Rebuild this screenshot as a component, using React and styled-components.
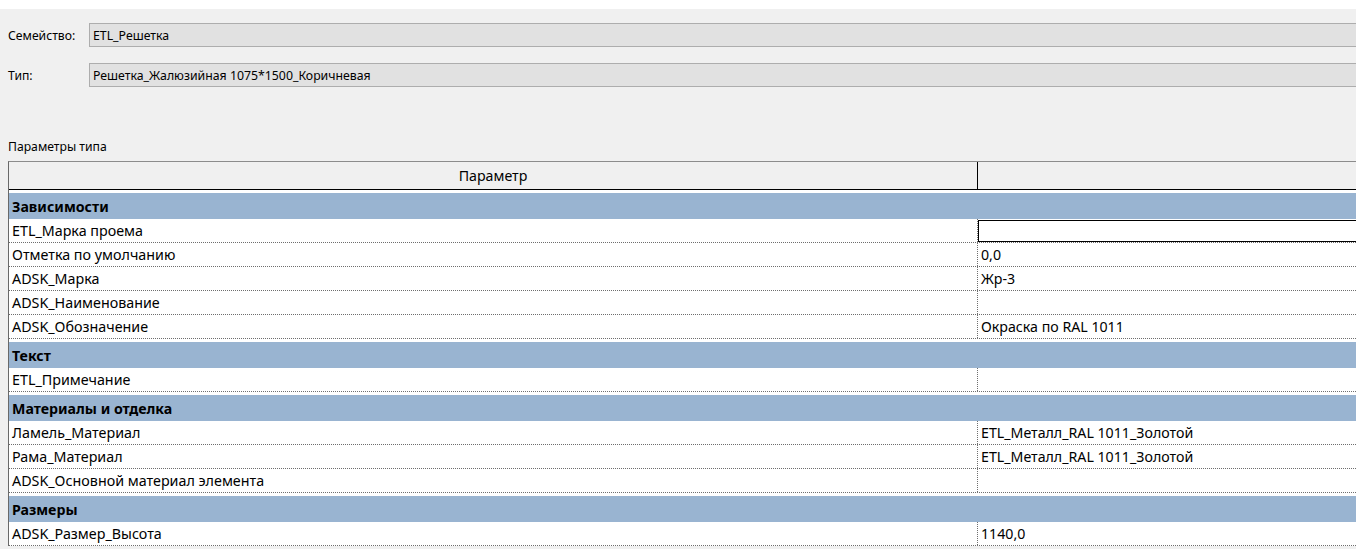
import React from 'react'
import styled, { createGlobalStyle } from 'styled-components'

const GlobalStyle = createGlobalStyle`
  html, body {
    margin: 0;
    padding: 0;
    background: #f0f0f0;
    overflow: hidden;
  }
  body {
    font-family: "Noto Sans", "Liberation Sans", sans-serif;
    color: #000;
  }
`

const Window = styled.div`
  width: 1356px;
  height: 549px;
  overflow: hidden;
  background: #f0f0f0;
`

const TopStrip = styled.div`
  height: 9px;
  background: #fff;
`

const Fields = styled.div`
  display: flex;
  flex-direction: column;
  gap: 16px;
  padding-top: 14px;
`

const FieldRow = styled.div`
  display: grid;
  grid-template-columns: 89px 1fr;
  align-items: center;
  height: 24px;
`

const FieldLabel = styled.span`
  padding-left: 8px;
  font-size: 12.2px;
`

const FieldBox = styled.div`
  height: 22px;
  display: flex;
  align-items: center;
  padding-left: 3px;
  background: #e1e1e1;
  border-top: 1px solid #adadad;
  border-bottom: 1px solid #adadad;
  border-left: 1px solid #adadad;
  font-size: 12.3px;
`

const SectionTitle = styled.div`
  margin-top: 52px;
  padding-left: 8px;
  font-size: 12.2px;
  line-height: 16px;
`

const Grid = styled.div`
  margin-top: 6px;
  margin-left: 8px;
  border-left: 1px solid #696969;
  border-top: 1px solid #8c8c8c;
  background: #fff;
`

const HeaderRow = styled.div`
  display: grid;
  grid-template-columns: 969px 1fr;
  height: 27px;
  background: #f0f0f0;
  border-bottom: 1px solid #000;
`

const HeaderCell = styled.div`
  display: flex;
  align-items: center;
  justify-content: center;
  font-size: 14.2px;
  border-right: ${p => (p.$divider ? '1px solid #000' : 'none')};
`

const GroupRow = styled.div`
  margin-top: 3px;
  height: 26px;
  display: flex;
  align-items: center;
  padding-left: 3px;
  background: #99b4d1;
  font-size: 14.2px;
  font-weight: 700;
`

const DataRow = styled.div`
  display: grid;
  grid-template-columns: 969px 1fr;
  height: 23px;
  border-bottom: 1px dotted #6e6e6e;
`

const NameCell = styled.div`
  display: flex;
  align-items: center;
  padding-left: 3px;
  font-size: 14.3px;
  border-right: 1px dotted #6e6e6e;
  white-space: nowrap;
`

const ValueCell = styled.div`
  display: flex;
  align-items: center;
  padding-left: 3px;
  font-size: 14.2px;
  white-space: nowrap;
  box-sizing: border-box;
  ${p =>
    p.$editing &&
    `
    border: 1px solid #000;
    border-right: none;
    margin: 1px 0 0 0;
  `}
`

const groups = [
  {
    title: 'Зависимости',
    rows: [
      ['ETL_Марка проема', '', true],
      ['Отметка по умолчанию', '0,0'],
      ['ADSK_Марка', 'Жр-3'],
      ['ADSK_Наименование', ''],
      ['ADSK_Обозначение', 'Окраска по RAL 1011'],
    ],
  },
  {
    title: 'Текст',
    rows: [['ETL_Примечание', '']],
  },
  {
    title: 'Материалы и отделка',
    rows: [
      ['Ламель_Материал', 'ETL_Металл_RAL 1011_Золотой'],
      ['Рама_Материал', 'ETL_Металл_RAL 1011_Золотой'],
      ['ADSK_Основной материал элемента', ''],
    ],
  },
  {
    title: 'Размеры',
    rows: [['ADSK_Размер_Высота', '1140,0']],
  },
]

export default function App() {
  return (
    <Window>
      <GlobalStyle />
      <TopStrip />
      <Fields>
        <FieldRow>
          <FieldLabel>Семейство:</FieldLabel>
          <FieldBox>ETL_Решетка</FieldBox>
        </FieldRow>
        <FieldRow>
          <FieldLabel>Тип:</FieldLabel>
          <FieldBox>Решетка_Жалюзийная 1075*1500_Коричневая</FieldBox>
        </FieldRow>
      </Fields>
      <SectionTitle>Параметры типа</SectionTitle>
      <Grid>
        <HeaderRow>
          <HeaderCell $divider>Параметр</HeaderCell>
          <HeaderCell />
        </HeaderRow>
        {groups.map(g => (
          <React.Fragment key={g.title}>
            <GroupRow>{g.title}</GroupRow>
            {g.rows.map(([name, value, editing]) => (
              <DataRow key={name}>
                <NameCell>{name}</NameCell>
                <ValueCell $editing={editing}>{value}</ValueCell>
              </DataRow>
            ))}
          </React.Fragment>
        ))}
      </Grid>
    </Window>
  )
}
